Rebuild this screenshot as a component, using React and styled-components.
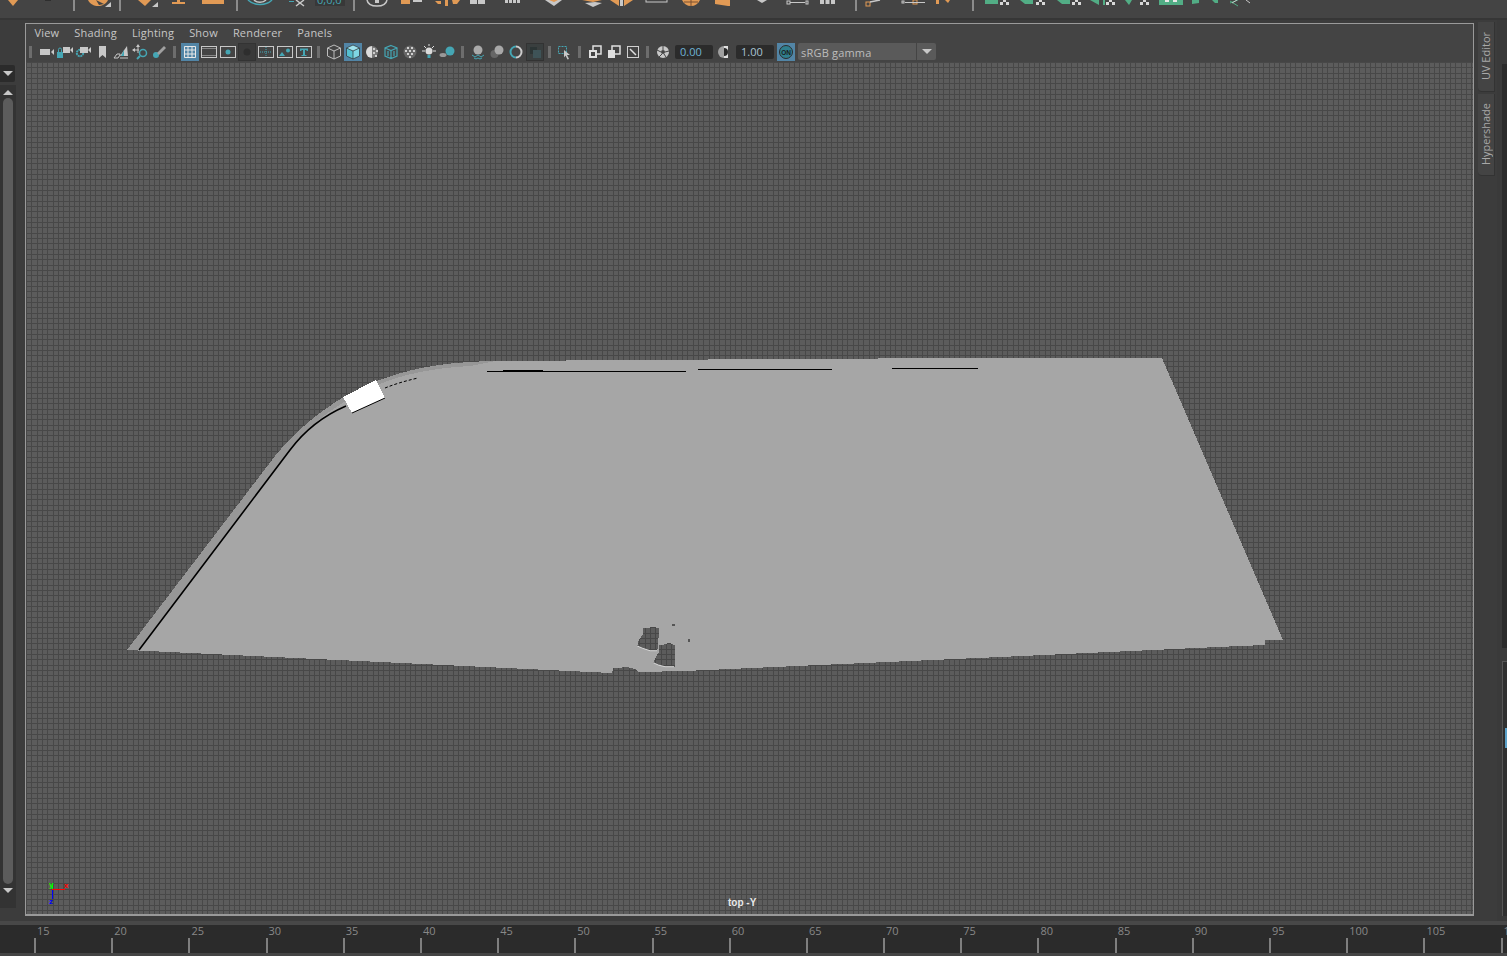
import React from 'react';
import styled, { createGlobalStyle } from 'styled-components';

const GlobalStyle = createGlobalStyle`
    html, body, #root {
        margin: 0;
        height: 100%;
        background: #444444;
    }
`;

const Page = styled.div`
    width: 100vw;
    height: 100vh;
    overflow: hidden;
    display: flex;
    flex-direction: column;
    background: #444444;
    font-family: "Open Sans", "Liberation Sans", sans-serif;
`;

// Top shelf, only the bottom of its icons is visible
const Shelf = styled.div`
    height: 18px;
    flex: none;
    display: flex;
    background: #444444;
    border-bottom: 2px solid #363636;
    overflow: hidden;
`;

const ShelfGroup = styled.svg`
    display: block;
    flex: none;
    height: 18px;
`;

const ShelfSep = styled.div`
    flex: none;
    width: 2px;
    height: 11px;
    background: #8c8c8c;
`;

const Main = styled.div`
    flex: none;
    height: 901px;
    display: flex;
`;

const LeftColumn = styled.div`
    flex: none;
    width: 22px;
    padding-top: 45px;
    box-sizing: border-box;
    background: #3c3c3c;
    display: flex;
    flex-direction: column;
`;

const OutlinerButton = styled.div`
    width: 15px;
    height: 17px;
    background: #2b2b2b;
    border-radius: 0 2px 2px 0;
    display: flex;
    align-items: center;
    justify-content: center;
`;

const DownArrow = styled.div`
    width: 0;
    height: 0;
    border-left: 5px solid transparent;
    border-right: 5px solid transparent;
    border-top: 5px solid #c8c8c8;
`;

const UpArrow = styled(DownArrow)`
    border-top: 0;
    border-bottom: 5px solid #c8c8c8;
`;

const ScrollTrack = styled.div`
    margin-top: 3px;
    width: 16px;
    height: 823px;
    background: #333333;
    display: flex;
    flex-direction: column;
    align-items: center;
    padding-top: 5px;
    box-sizing: border-box;
`;

const ScrollThumb = styled.div`
    width: 10px;
    height: 786px;
    margin: 3px 0 4px;
    background: #5c5c5c;
    border-radius: 5px;
`;

const ViewPanel = styled.div`
    flex: 1;
    min-width: 0;
    padding: 3px 4px 5px 3px;
    background: #3c3c3c;
    display: flex;
`;

const Frame = styled.div`
    flex: 1;
    min-width: 0;
    display: flex;
    flex-direction: column;
    border: 1px solid #9a9a9a;
    border-bottom-width: 2px;
    background: #444444;
`;

const MenuBar = styled.div`
    height: 19px;
    flex: none;
    display: flex;
    align-items: center;
    padding: 0 0 2px 1px;
    box-sizing: border-box;
`;

const MenuItem = styled.span`
    padding: 0 7.5px;
    font-size: 11px;
    letter-spacing: 0.2px;
    color: #c6c6c6;
`;

const ToolBar = styled.div`
    height: 19px;
    flex: none;
    display: flex;
    align-items: flex-start;
`;

const ToolSep = styled.div`
    flex: none;
    width: 11px;
    height: 18px;
    position: relative;

    &::after {
        content: "";
        position: absolute;
        left: 3px;
        top: 3px;
        width: 3px;
        height: 12px;
        background: #6d6d6d;
    }
`;

const ToolButton = styled.div`
    flex: none;
    width: 19px;
    height: 18px;
    margin-left: ${(p) => p.$left || 0}px;
    background: ${(p) => (p.$active ? 'linear-gradient(#5285a6, #5285a6) no-repeat 0 0 / 18px 18px' : 'none')};

    svg {
        display: block;
    }
`;

const NumberField = styled.div`
    flex: none;
    width: 38px;
    height: 14px;
    margin: 2px 0 0 2px;
    background: #2b2b2b;
    border-radius: 2px;
    font-size: 11px;
    line-height: 14px;
    padding-left: 5px;
    box-sizing: border-box;
    color: ${(p) => p.$color};
`;

const ColorCombo = styled.div`
    flex: none;
    width: 138px;
    height: 17px;
    margin-left: 2px;
    background: #5a5a5a;
    border-radius: 2px;
    display: flex;
    align-items: center;
    font-size: 11px;
    color: #bdbdbd;
`;

const ComboLabel = styled.span`
    flex: 1;
    padding: 2px 0 0 3px;
    letter-spacing: 0.2px;
`;

const ComboArrow = styled.div`
    width: 19px;
    height: 17px;
    border-left: 1px solid #444444;
    display: flex;
    align-items: center;
    justify-content: center;
`;

const Canvas = styled.div`
    flex: 1;
    position: relative;
    overflow: hidden;
    background-color: #5c5c5c;
    background-image:
        linear-gradient(to right, #484848 1px, transparent 1px 5px, #484848 5px 6px, transparent 6px 11px, #484848 11px 12px, transparent 12px),
        linear-gradient(to bottom, #484848 1px, transparent 1px 5px, #484848 5px 6px, transparent 6px 11px, #484848 11px 12px, transparent 12px);
    background-size: 16px 16px;
`;

const ModelDrawing = styled.svg`
    position: absolute;
    inset: 0;
    width: 100%;
    height: 100%;
`;

const CameraLabel = styled.span`
    position: absolute;
    left: 702px;
    bottom: 6px;
    white-space: nowrap;
    font-family: "Liberation Sans", sans-serif;
    font-size: 10px;
    font-weight: bold;
    color: #e8e8e8;
`;

const SideTabs = styled.div`
    flex: none;
    width: 19px;
    padding-top: 2px;
    background: #3c3c3c;
    display: flex;
    flex-direction: column;
    gap: 2px;
`;

const SideTab = styled.div`
    height: ${(p) => p.$height}px;
    width: 17px;
    padding-right: 2px;
    box-sizing: border-box;
    background: #444444;
    border-right: 1px solid #333333;
    border-bottom: 1px solid #333333;
    border-radius: 0 0 0 4px;
    display: flex;
    align-items: center;
    justify-content: center;
`;

const SideLabel = styled.span`
    writing-mode: vertical-rl;
    transform: rotate(180deg);
    font-size: 11px;
    color: #a8a8a8;
`;

const FarRight = styled.div`
    flex: none;
    width: 10px;
    background: #3a3a3a;
    padding: 44px 0 0 5px;
    box-sizing: border-box;
    display: flex;
    flex-direction: column;
`;

const FarTop = styled.div`
    height: 584px;
    background: #2b2b2b;
`;

const FarPanel = styled.div`
    margin-top: 13px;
    height: 254px;
    background: #2f2f2f;
    border-left: 1px solid #555555;
    border-top: 1px solid #555555;
    position: relative;

    &::after {
        content: "";
        position: absolute;
        left: 2px;
        top: 66px;
        width: 3px;
        height: 20px;
        background: #5aa0c8;
    }
`;

const BottomStrip = styled.div`
    flex: none;
    height: 4px;
    background: #484848;
`;

const TimeSlider = styled.div`
    flex: none;
    height: 28px;
    padding-left: 34px;
    background: #2b2b2b;
    display: flex;
`;

const TickCell = styled.div`
    flex: none;
    width: 77.2px;
    display: flex;
    flex-direction: column;
    justify-content: space-between;
`;

const TickLabel = styled.span`
    padding: 0 0 0 3px;
    font-size: 11px;
    line-height: 12px;
    color: #888888;
`;

const TickMark = styled.div`
    width: 2px;
    height: 15px;
    background: #7f7f7f;
`;

const LIGHT = '#c8c8c8';
const TEAL = '#45a6b4';
const ORANGE = '#e19a55';
const GREEN = '#52ad85';

// Checker used by the small corner mark of the green deformer icons
const Checker = ({ x }) => (
    <g fill="#d8d8d8">
        <rect x={x + 3} y="0" width="3" height="2" />
        <rect x={x} y="2" width="3" height="3" />
        <rect x={x + 6} y="2" width="3" height="3" />
    </g>
);

const shelfGroups = [
    {
        from: 0,
        to: 73,
        icon: (
            <>
                <path d="M8 0h10l-5 6z" fill={ORANGE} />
                <rect x="45" y="0" width="6" height="1" fill="#2e2e2e" />
            </>
        ),
    },
    {
        from: 75,
        to: 119,
        icon: (
            <>
                <path d="M88 0h20c-2 4-6 6-10 6s-8-2-10-6z" fill={ORANGE} />
                <path d="M96 0l8 4-5 1z" fill="#444444" />
                <path d="M111 2v5h-6z" fill={LIGHT} />
            </>
        ),
    },
    {
        from: 121,
        to: 236,
        icon: (
            <>
                <path d="M138 0h13l-6 6z" fill={ORANGE} />
                <path d="M158 2v5h-6z" fill={LIGHT} />
                <path d="M172 2h13v2h-13zM177 0h3v3h-3z" fill={ORANGE} />
                <rect x="202" y="0" width="22" height="4" fill={ORANGE} />
            </>
        ),
    },
    {
        from: 238,
        to: 353,
        icon: (
            <>
                <path d="M248 0c6 6 18 6 24 0" fill="none" stroke={TEAL} strokeWidth="1.5" />
                <path d="M254 0c3 3 9 3 12 0" fill="none" stroke={LIGHT} strokeWidth="1.5" />
                <path d="M296 0l8 6M304 0l-8 6" stroke={LIGHT} strokeWidth="1.5" />
                <rect x="289" y="1" width="5" height="1" fill={TEAL} />
                <rect x="315" y="0" width="30" height="6" fill="#383838" />
                <text x="317" y="4" fontSize="11" fill={TEAL} fontFamily="Open Sans">0,0,0</text>
            </>
        ),
    },
    {
        from: 355,
        to: 855,
        icon: (
            <>
                <path d="M367 0c1 5 6 6 10 6s9-1 10-6" fill="none" stroke={LIGHT} strokeWidth="1.5" />
                <rect x="375" y="0" width="4" height="3" fill={LIGHT} />
                <rect x="401" y="0" width="9" height="4" fill={ORANGE} />
                <rect x="413" y="0" width="9" height="2" fill={LIGHT} />
                <path d="M435 1h6v3h-3zM445 0h3v6h-3zM452 0h8l-3 4h-4z" fill={ORANGE} />
                <rect x="470" y="0" width="7" height="4" fill={LIGHT} />
                <rect x="478" y="0" width="7" height="4" fill={LIGHT} />
                <g fill={LIGHT}>
                    <rect x="505" y="0" width="3" height="3" />
                    <rect x="509" y="0" width="3" height="3" />
                    <rect x="513" y="0" width="3" height="3" />
                    <rect x="517" y="0" width="3" height="3" />
                </g>
                <path d="M545 0h17l-8 6z" fill={LIGHT} />
                <path d="M549 0h9l-4 2z" fill={ORANGE} />
                <path d="M582 0h20l-9 2z" fill={ORANGE} />
                <path d="M585 3l10-1 7 1-9 4z" fill={LIGHT} />
                <path d="M610 0h9v6zM624 0h9l-9 6z" fill={ORANGE} />
                <rect x="620" y="0" width="3" height="6" fill={LIGHT} />
                <rect x="646" y="-4" width="21" height="6" fill="none" stroke={LIGHT} strokeWidth="1" />
                <path d="M682 0h18c-2 4-5 6-9 6s-7-2-9-6z" fill={ORANGE} />
                <path d="M691 0v6M684 2h14" stroke="#7a5030" />
                <path d="M715 0h15v6h-2l-13-2z" fill={ORANGE} />
                <path d="M757 0h10l-5 3z" fill={LIGHT} />
                <rect x="787" y="1" width="3" height="3" fill="none" stroke={LIGHT} />
                <rect x="790" y="2" width="15" height="1" fill={LIGHT} />
                <rect x="806" y="1" width="2" height="3" fill="none" stroke={LIGHT} />
                <g fill={LIGHT}>
                    <rect x="820" y="0" width="4" height="4" />
                    <rect x="825.5" y="0" width="4" height="4" />
                    <rect x="831" y="0" width="4" height="4" />
                </g>
            </>
        ),
    },
    {
        from: 857,
        to: 972,
        icon: (
            <>
                <rect x="866" y="2" width="4" height="4" fill="none" stroke={ORANGE} />
                <path d="M870 2l10-2" stroke={LIGHT} strokeWidth="1.5" />
                <rect x="902" y="1" width="2" height="2" fill="none" stroke={LIGHT} />
                <rect x="913" y="0" width="4" height="4" fill="none" stroke={ORANGE} />
                <rect x="905" y="2" width="20" height="1" fill={LIGHT} />
                <rect x="936" y="0" width="3" height="4" fill={ORANGE} />
                <path d="M945 0h5l-2 3z" fill={ORANGE} />
            </>
        ),
    },
    {
        from: 974,
        to: 1507,
        icon: (
            <>
                <rect x="985" y="0" width="13" height="4" fill={GREEN} />
                <Checker x={1000} />
                <path d="M1020 0h13v4h-8z" fill={GREEN} />
                <Checker x={1036} />
                <path d="M1057 0h13v4h-8z" fill={GREEN} />
                <Checker x={1072} />
                <path d="M1090 0l9 5V0z" fill={GREEN} />
                <rect x="1103" y="0" width="2" height="5" fill={GREEN} />
                <Checker x={1106} />
                <path d="M1125 0h7l-3 5z" fill={GREEN} />
                <Checker x={1140} />
                <rect x="1159" y="0" width="24" height="5" fill={GREEN} />
                <rect x="1165" y="0" width="4" height="2" fill="#e8e8e8" />
                <rect x="1173" y="0" width="4" height="2" fill="#e8e8e8" />
                <path d="M1192 0h7v3l-7 1zM1212 0h6v3h-3z" fill={GREEN} />
                <path d="M1230 3l8-3M1230 1l8 5" stroke={GREEN} strokeWidth="1" />
                <path d="M1232 3l5-3M1246 0l4 3" stroke={LIGHT} strokeWidth="1" />
            </>
        ),
    },
];

const toolIcons = {
    camera: (
        <>
            <rect x="3" y="6" width="10" height="6" fill={LIGHT} />
            <path d="M14 9l3-3v6z" fill={LIGHT} />
        </>
    ),
    lockCamera: (
        <>
            <rect x="1" y="9" width="6" height="6" fill={TEAL} />
            <path d="M2.500 9V6.500a1.500 1.500 0 0 1 3 0V9" fill="none" stroke={TEAL} />
            <rect x="7" y="4" width="7" height="6" fill={LIGHT} />
            <path d="M14 7l3-3v6z" fill={LIGHT} />
        </>
    ),
    gearCamera: (
        <>
            <circle cx="5" cy="10" r="3.200" fill="none" stroke={TEAL} strokeWidth="2" strokeDasharray="2 0.600" />
            <rect x="5" y="4" width="8" height="6" fill={LIGHT} />
            <path d="M13 7l3-3v6z" fill={LIGHT} />
        </>
    ),
    bookmark: <path d="M5 3h7v12l-3.500-3L5 15z" fill={LIGHT} />,
    plane: (
        <>
            <path d="M7 13L14 3l1 10z" fill={LIGHT} />
            <path d="M1 15l3-4h3v1l-2 3z" fill="none" stroke={LIGHT} />
            <path d="M7 15h8" stroke={LIGHT} />
            <path d="M8 13l3-6v6z" fill={TEAL} />
        </>
    ),
    moveLens: (
        <>
            <circle cx="11" cy="10" r="3.500" fill="none" stroke={TEAL} strokeWidth="1.500" />
            <path d="M8 13l-3 3" stroke={TEAL} strokeWidth="2" />
            <path d="M6 3v7M1 7h6" stroke={LIGHT} strokeWidth="1" />
            <path d="M6 1l-2 3h4zM0 7l3-2v4z" fill={LIGHT} />
        </>
    ),
    brushLens: (
        <>
            <circle cx="5" cy="12" r="3" fill={TEAL} />
            <path d="M6 10l7-7 2 2-7 7z" fill="#a0a0a0" />
        </>
    ),
    grid: (
        <path d="M3.500 3.500h11v11h-11zM3.500 7h11M3.500 11h11M7 3.500v11M11 3.500v11" fill="none" stroke="#e8e8e8" />
    ),
    film: (
        <>
            <rect x="1.500" y="3.500" width="15" height="11" fill="none" stroke={LIGHT} />
            <path d="M1.500 5.500h15M1.500 12.500h15" stroke={LIGHT} strokeDasharray="1 1" />
        </>
    ),
    dot: (
        <>
            <rect x="1.500" y="3.500" width="15" height="11" fill="none" stroke={LIGHT} />
            <circle cx="9" cy="9" r="2.500" fill={TEAL} />
        </>
    ),
    darkDot: (
        <>
            <rect x="0.500" y="0.500" width="17" height="17" fill="#3a3a3a" stroke="#333333" />
            <circle cx="9" cy="9" r="3.500" fill="#2e2e2e" />
        </>
    ),
    safeArea: (
        <>
            <rect x="1.500" y="3.500" width="15" height="11" fill="none" stroke={LIGHT} />
            <path d="M3 9h12M9 4v10" stroke={TEAL} strokeDasharray="1 1" />
        </>
    ),
    picture: (
        <>
            <rect x="1.500" y="3.500" width="15" height="11" fill="none" stroke={LIGHT} />
            <path d="M3 13l3-4 3 4z" fill={TEAL} />
            <circle cx="12" cy="7.500" r="2" fill={TEAL} />
        </>
    ),
    textGate: (
        <>
            <rect x="1.500" y="3.500" width="15" height="11" fill="none" stroke={LIGHT} />
            <path d="M5 5.500h8v2.500h-1l-1-1H10v5h1.500v1H6.500v-1H8V7H7L6 8H5z" fill={TEAL} />
        </>
    ),
    wireCube: <path d="M9 2l6.500 3v8L9 16l-6.500-3V5zM2.500 5L9 8l6.500-3M9 8v8" fill="none" stroke="#bdbdbd" />,
    solidCube: (
        <>
            <path d="M9 2l6.500 3L9 8 2.500 5z" fill="#9fe3ee" />
            <path d="M2.500 5L9 8v8l-6.500-3z" fill="#55c0d0" />
            <path d="M15.500 5L9 8v8l6.500-3z" fill="#7fd6e3" />
            <path d="M9 2l6.500 3v8L9 16l-6.500-3V5zM2.500 5L9 8l6.500-3M9 8v8" fill="none" stroke="#303030" strokeWidth="0.700" />
        </>
    ),
    halfChecker: (
        <>
            <path d="M9 3a6 6 0 0 0 0 12z" fill="#dcdcdc" />
            <path d="M9 3a6 6 0 0 1 0 12z" fill="#7a7a7a" />
            <path d="M10 5h2v2h-2zM13 7h2v2h-2zM10 9h2v2h-2zM12 12h2v2h-2z" fill="#cfcfcf" />
        </>
    ),
    tealCube: (
        <path d="M9 2.500l6 2.500v8l-6 2.500L3 13V5zM3 5l6 2.500L15 5M9 7.500v8M6 8v5M12 8v5" fill="none" stroke={TEAL} strokeWidth="1.200" />
    ),
    checkerBall: (
        <>
            <circle cx="9" cy="9" r="6.500" fill="#666666" />
            <path d="M6 4h2v2H6zM10 4h2v2h-2zM4 7h2v2H4zM8 7h2v2H8zM12 7h2v2h-2zM6 10h2v2H6zM10 10h2v2h-2zM8 13h2v2H8z" fill="#d0d0d0" />
        </>
    ),
    bulb: (
        <>
            <circle cx="9" cy="8" r="3.500" fill="#dcdcdc" />
            <rect x="7.500" y="12" width="3" height="3" fill={TEAL} />
            <path d="M2 8h3M13 8h3M4 3l2 2M14 3l-2 2M9 1v2" stroke="#dcdcdc" />
        </>
    ),
    shadowBall: (
        <>
            <circle cx="11" cy="8" r="4.500" fill={TEAL} />
            <ellipse cx="4" cy="12" rx="3.500" ry="2" fill="#999999" />
        </>
    ),
    xrayBall: (
        <>
            <circle cx="9" cy="7" r="4.500" fill="#aaaaaa" />
            <path d="M3 12l3 2 3-2 3 2 3-2M5 15l2 1 2-1 2 1 2-1" fill="none" stroke={TEAL} />
        </>
    ),
    twoBalls: (
        <>
            <circle cx="6.500" cy="11" r="4" fill="#666666" />
            <circle cx="11" cy="7" r="4.500" fill="#a8a8a8" />
        </>
    ),
    ring: (
        <>
            <path d="M9 3.500a5.500 5.500 0 0 0 0 11" fill="none" stroke={TEAL} strokeWidth="2" />
            <path d="M9 3.500a5.500 5.500 0 0 1 0 11" fill="none" stroke="#cccccc" strokeWidth="2" />
        </>
    ),
    darkSquares: (
        <>
            <rect x="0.500" y="0.500" width="17" height="17" fill="#3a3f3f" stroke="#333333" />
            <rect x="4" y="4" width="7" height="7" fill="#2c3535" />
            <rect x="7" y="7" width="8" height="8" fill="#3e5357" />
        </>
    ),
    selectCursor: (
        <>
            <rect x="2.500" y="3.500" width="8" height="7" fill="none" stroke={TEAL} strokeDasharray="2 1" />
            <path d="M8 7l6 5-3 0 2 4-1.500 .500-2-4-1.500 2z" fill={LIGHT} />
        </>
    ),
    stackFilled: (
        <>
            <rect x="7" y="3" width="8" height="8" fill="none" stroke="#e0e0e0" strokeWidth="1.500" />
            <rect x="3" y="7" width="8" height="8" fill="#e0e0e0" />
            <rect x="5" y="9" width="4" height="4" fill="#444444" />
        </>
    ),
    stackOutline: (
        <>
            <rect x="7" y="3" width="8" height="8" fill="none" stroke="#e0e0e0" strokeWidth="1.500" />
            <rect x="3" y="7" width="7" height="8" fill="#e0e0e0" />
        </>
    ),
    brushBox: (
        <>
            <rect x="3.500" y="3.500" width="11" height="11" fill="none" stroke="#d0d0d0" />
            <path d="M6 6l6 6" stroke="#e0e0e0" strokeWidth="1.500" />
        </>
    ),
    aperture: (
        <>
            <circle cx="9" cy="9" r="6" fill="#c8c8c8" />
            <circle cx="9" cy="9" r="2" fill="#444444" />
            <path d="M9 3v4M15 8l-4 1M12 14l-2-3M5 14l3-3M3 7l4 2" stroke="#444444" />
        </>
    ),
    halfDisc: (
        <>
            <path d="M9 3a6 6 0 0 0 0 12z" fill="#a0a0a0" />
            <path d="M9 3h4v12H9z" fill="#e0e0e0" />
            <path d="M9 5a4 4 0 0 1 0 8z" fill="#2a2a2a" />
        </>
    ),
    on: (
        <>
            <circle cx="9" cy="9" r="6.500" fill="#2f7f8e" stroke="#2c2c2c" />
            <text x="9" y="11.500" textAnchor="middle" fontSize="6.500" fontWeight="700" fontFamily="Liberation Sans" fill="#1b1b1b">ON</text>
        </>
    ),
};

const ToolIcon = ({ name, active, left }) => (
    <ToolButton $active={active} $left={left}>
        <svg width="18" height="18" viewBox="0 0 18 18">{toolIcons[name]}</svg>
    </ToolButton>
);

const ticks = Array.from({ length: 20 }, (_, i) => 15 + i * 5);

// Outline of the flat mesh with its two holes, in page coordinates
const MESH =
    'M127 650L275 456C300 425 340 393 385 378C420 366 450 362 495 361L780 359L975 358L1162 358L1283 640L1265 640L1265 645L1240 646L1000 657L685 671L638 672L635 669L627 667L613 668.500L612 673Z' +
    'M642.700 628.300L648.300 628.300L652.700 626.700L658.700 628.300L658.700 636.700L657.300 650.700L650 650.700L642.700 648.300L637.300 646L638.700 640L642.700 635Z' +
    'M659.300 645L663.300 645L668.300 642.700L674.700 645L674.700 666.700L665 666.700L658.300 665L653.300 662.700L656 656.700L659.300 651.700Z';

const App = () => {
    return (
        <Page>
            <GlobalStyle />
            <Shelf>
                {shelfGroups.map((g, i) => (
                    <React.Fragment key={g.from}>
                        <ShelfGroup width={g.to - g.from} viewBox={`${g.from} 0 ${g.to - g.from} 18`}>
                            {g.icon}
                        </ShelfGroup>
                        {i < shelfGroups.length - 1 && <ShelfSep />}
                    </React.Fragment>
                ))}
            </Shelf>
            <Main>
                <LeftColumn>
                    <OutlinerButton>
                        <DownArrow />
                    </OutlinerButton>
                    <ScrollTrack>
                        <UpArrow />
                        <ScrollThumb />
                        <DownArrow />
                    </ScrollTrack>
                </LeftColumn>
                <ViewPanel>
                    <Frame>
                        <MenuBar>
                            <MenuItem>View</MenuItem>
                            <MenuItem>Shading</MenuItem>
                            <MenuItem>Lighting</MenuItem>
                            <MenuItem>Show</MenuItem>
                            <MenuItem>Renderer</MenuItem>
                            <MenuItem>Panels</MenuItem>
                        </MenuBar>
                        <ToolBar>
                            <ToolSep />
                            <ToolIcon name="camera" />
                            <ToolIcon name="lockCamera" />
                            <ToolIcon name="gearCamera" />
                            <ToolIcon name="bookmark" />
                            <ToolIcon name="plane" />
                            <ToolIcon name="moveLens" />
                            <ToolIcon name="brushLens" />
                            <ToolSep />
                            <ToolIcon name="grid" active />
                            <ToolIcon name="film" />
                            <ToolIcon name="dot" />
                            <ToolIcon name="darkDot" />
                            <ToolIcon name="safeArea" />
                            <ToolIcon name="picture" />
                            <ToolIcon name="textGate" />
                            <ToolSep />
                            <ToolIcon name="wireCube" />
                            <ToolIcon name="solidCube" active />
                            <ToolIcon name="halfChecker" />
                            <ToolIcon name="tealCube" />
                            <ToolIcon name="checkerBall" />
                            <ToolIcon name="bulb" />
                            <ToolIcon name="shadowBall" />
                            <ToolSep />
                            <ToolIcon name="xrayBall" />
                            <ToolIcon name="twoBalls" />
                            <ToolIcon name="ring" />
                            <ToolIcon name="darkSquares" />
                            <ToolSep />
                            <ToolIcon name="selectCursor" />
                            <ToolSep />
                            <ToolIcon name="stackFilled" />
                            <ToolIcon name="stackOutline" />
                            <ToolIcon name="brushBox" />
                            <ToolSep />
                            <ToolIcon name="aperture" />
                            <NumberField $color="#6fb3d6">0.00</NumberField>
                            <ToolIcon name="halfDisc" left={2} />
                            <NumberField $color="#a9c4d4">1.00</NumberField>
                            <ToolIcon name="on" active left={3} />
                            <ColorCombo>
                                <ComboLabel>sRGB gamma</ComboLabel>
                                <ComboArrow>
                                    <DownArrow />
                                </ComboArrow>
                            </ColorCombo>
                        </ToolBar>
                        <Canvas>
                            <ModelDrawing viewBox="26 62 1447 852" preserveAspectRatio="xMinYMin meet" shapeRendering="crispEdges">
                                <path d={MESH} fill="#a6a6a6" fillRule="evenodd" />
                                <path
                                    d="M127 650L275 456C300 425 340 393 385 378C420 366 450 362 495 361L470 366C430 368 400 376 385 382C345 398 312 420 290 450L138 650Z"
                                    fill="#979797"
                                />
                                <path d="M139 650L290 450C305 430 325 415 346 406" fill="none" stroke="#000000" strokeWidth="1.600" shapeRendering="auto" />
                                <path d="M385 388C395 384 405 381 418 378" fill="none" stroke="#000000" strokeWidth="1" strokeDasharray="3 2" shapeRendering="auto" />
                                <path d="M376 381L385 398L380 399Z" fill="#555555" />
                                <path d="M343 397L376 380L385 398L352 413Z" fill="#ffffff" />
                                <path d="M352 413L385 398" stroke="#000000" strokeWidth="1" shapeRendering="auto" />
                                <path d="M487 371H686M698 369.500H832M892 368.500H978" stroke="#000000" strokeWidth="1" />
                                <path d="M503 370.500H543" stroke="#000000" strokeWidth="2" />
                                <path d="M637.300 646L642.700 648.300L650 650.700L657 650.700M653.300 662.700L658.300 665L665 666.700L674 666.700" fill="none" stroke="#d8d8d8" strokeWidth="1" shapeRendering="auto" />
                                <rect x="672" y="624" width="3" height="2" fill="#555555" />
                                <rect x="688" y="639" width="2" height="3" fill="#555555" />
                                <path d="M52 889V899" stroke="#0000ff" />
                                <path d="M52 889V884" stroke="#00ff00" />
                                <path d="M52 889H65" stroke="#ff0000" />
                                <text x="49" y="887" fontSize="8" fontWeight="700" fontFamily="Liberation Sans" fill="#00ff00">y</text>
                                <text x="64" y="888" fontSize="8" fontWeight="700" fontFamily="Liberation Sans" fill="#ff0000">x</text>
                                <text x="49" y="904" fontSize="8" fontWeight="700" fontFamily="Liberation Sans" fill="#0000ff">z</text>
                            </ModelDrawing>
                            <CameraLabel>top -Y</CameraLabel>
                        </Canvas>
                    </Frame>
                </ViewPanel>
                <SideTabs>
                    <SideTab $height={70}>
                        <SideLabel>UV Editor</SideLabel>
                    </SideTab>
                    <SideTab $height={82}>
                        <SideLabel>Hypershade</SideLabel>
                    </SideTab>
                </SideTabs>
                <FarRight>
                    <FarTop />
                    <FarPanel />
                </FarRight>
            </Main>
            <BottomStrip />
            <TimeSlider>
                {ticks.map((t) => (
                    <TickCell key={t}>
                        <TickLabel>{t}</TickLabel>
                        <TickMark />
                    </TickCell>
                ))}
            </TimeSlider>
        </Page>
    );
};

export default App;
